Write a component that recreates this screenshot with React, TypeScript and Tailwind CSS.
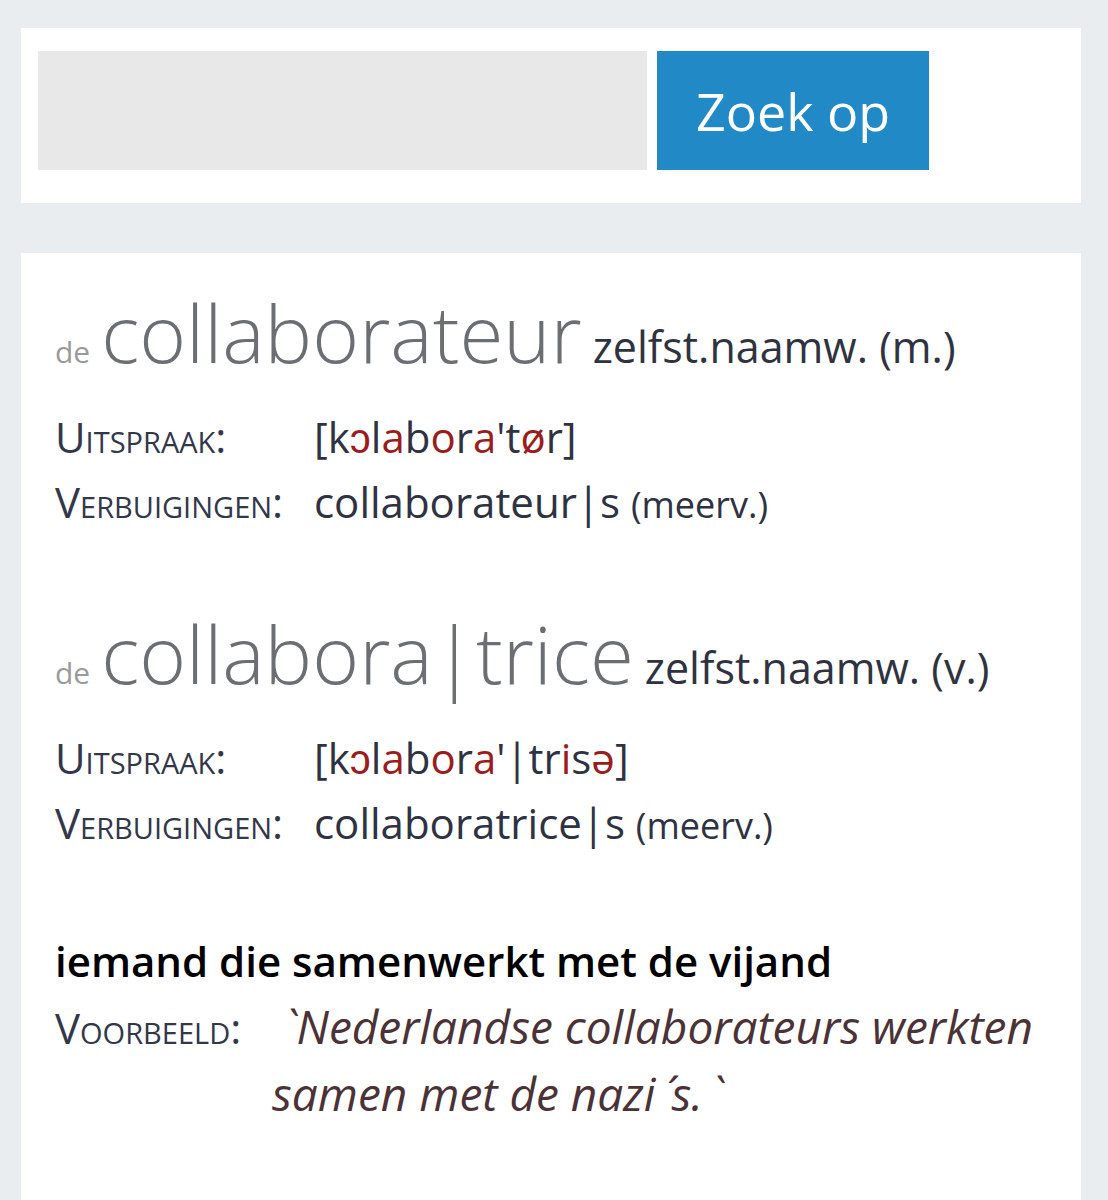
import React from 'react';

const FONT = "font-['Open_Sans',_'Liberation_Sans',_sans-serif]";

type Part = [string, boolean];

// pronunciation: [text, isVowel]
const PRON_1: Part[] = [
  ['[k', false], ['ɔ', true], ['l', false], ['a', true], ['b', false], ['o', true],
  ['r', false], ['a', true], ["'t", false], ['ø', true], ['r]', false],
];
const PRON_2: Part[] = [
  ['[k', false], ['ɔ', true], ['l', false], ['a', true], ['b', false], ['o', true],
  ['r', false], ['a', true], ["'|tr", false], ['i', true], ['s', false], ['ə', true], [']', false],
];

function Pron({ parts }: { parts: Part[] }) {
  return (
    <span>
      {parts.map(([t, red], i) => (
        <span key={i} className={red ? 'text-[#9b1c1c]' : 'text-[#2e3242]'}>{t}</span>
      ))}
    </span>
  );
}

function Row({ label, children }: { label: string; children: React.ReactNode }) {
  return (
    <div className="flex items-baseline">
      <div className="w-[259px] shrink-0 text-[#33374a] [font-variant:small-caps]">{label}</div>
      <div className="text-[#2e3242]">{children}</div>
    </div>
  );
}

function Headword({ word, kind }: { word: string; kind: string }) {
  return (
    <div className="leading-none whitespace-nowrap">
      <span className="text-[30px] text-[#9a9a9a]">de</span>{' '}
      <span className="text-[80px] font-light text-[#6b6f74]">{word}</span>{' '}
      <span className="text-[43px] text-[#2f3340]">{kind}</span>
    </div>
  );
}

export default function App() {
  return (
    <div className={`min-h-[1200px] bg-[#e9edf0] pl-[21px] pr-[27px] pt-[28px] ${FONT}`}>
      {/* search */}
      <div className="bg-white h-[175px] pl-[17px] pt-[23px] flex gap-[10px]">
        <div className="w-[609px] h-[119px] bg-[#e8e8e8]" />
        <button className="w-[272px] h-[119px] bg-[#2189c5] text-white text-[52px]">Zoek op</button>
      </div>

      {/* result */}
      <div className="mt-[50px] bg-white pl-[34px] pt-[39px] pb-[80px] text-[42px] leading-[65px]">
        <Headword word="collaborateur" kind="zelfst.naamw. (m.)" />
        <div className="mt-[32px]">
          <Row label="Uitspraak:"><Pron parts={PRON_1} /></Row>
          <Row label="Verbuigingen:">
            collaborateur|s <span className="text-[36px]">(meerv.)</span>
          </Row>
        </div>

        <div className="mt-[76px]">
          <Headword word="collabora|trice" kind="zelfst.naamw. (v.)" />
        </div>
        <div className="mt-[32px]">
          <Row label="Uitspraak:"><Pron parts={PRON_2} /></Row>
          <Row label="Verbuigingen:">
            collaboratrice|s <span className="text-[36px]">(meerv.)</span>
          </Row>
        </div>

        <div className="mt-[70px] font-semibold text-black">iemand die samenwerkt met de vijand</div>
        <div className="flex items-baseline leading-[67px]">
          <div className="w-[217px] shrink-0 text-[#33374a] [font-variant:small-caps]">Voorbeeld:</div>
          <div className="italic text-[46px] text-[#4b3236] indent-[12px] pr-[30px]">
            `Nederlandse collaborateurs werkten samen met de nazi<span className="inline-block indent-0 mx-[8px]">´</span>s.<span className="inline-block indent-0 ml-[8px]">`</span>
          </div>
        </div>
      </div>
    </div>
  );
}
